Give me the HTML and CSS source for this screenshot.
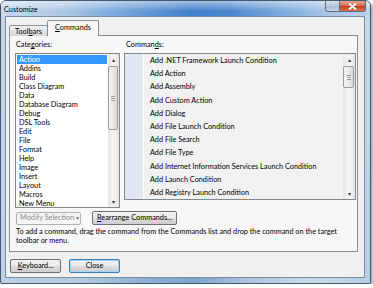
FILE: index.html
```html
<!DOCTYPE html>
<html lang="en">
<head>
    <meta charset="UTF-8">
    <title>Customize</title>
    <link rel="stylesheet" href="styles.css">
</head>
<body>
    <div class="window">
        <div class="titlebar">
            <span class="title">Customize</span>
            <div class="caption-buttons">
                <span class="cap-help">?</span>
                <span class="cap-close">
                    <svg width="9" height="7" viewBox="0 0 9 7"><path d="M1 0.5 L8 6.5 M8 0.5 L1 6.5" stroke="#fff" stroke-width="1.8"/></svg>
                </span>
            </div>
        </div>

        <div class="client">
            <div class="tabs">
                <div class="tab">Tool<u>b</u>ars</div>
                <div class="tab active"><u>C</u>ommands</div>
            </div>

            <div class="panel">
                <div class="lists">
                    <div class="cat-col">
                        <div class="label">Cate<u>g</u>ories:</div>
                        <div class="listbox cat-list">
                            <div class="items">
                                <div class="item selected">Action</div>
                                <div class="item">Addins</div>
                                <div class="item">Build</div>
                                <div class="item">Class Diagram</div>
                                <div class="item">Data</div>
                                <div class="item">Database Diagram</div>
                                <div class="item">Debug</div>
                                <div class="item">DSL Tools</div>
                                <div class="item">Edit</div>
                                <div class="item">File</div>
                                <div class="item">Format</div>
                                <div class="item">Help</div>
                                <div class="item">Image</div>
                                <div class="item">Insert</div>
                                <div class="item">Layout</div>
                                <div class="item">Macros</div>
                                <div class="item">New Menu</div>
                            </div>
                            <div class="scrollbar">
                                <div class="arrow">&#9652;</div>
                                <div class="track">
                                    <div class="thumb cat-thumb"><span class="grip"></span></div>
                                </div>
                                <div class="arrow">&#9662;</div>
                            </div>
                        </div>
                    </div>

                    <div class="cmd-col">
                        <div class="label">Comman<u>d</u>s:</div>
                        <div class="listbox cmd-list">
                            <div class="rows">
                                <div class="row"><span class="icon-cell"></span><span>Add .NET Framework Launch Condition</span></div>
                                <div class="row"><span class="icon-cell"></span><span>Add Action</span></div>
                                <div class="row"><span class="icon-cell"></span><span>Add Assembly</span></div>
                                <div class="row"><span class="icon-cell"></span><span>Add Custom Action</span></div>
                                <div class="row"><span class="icon-cell"></span><span>Add Dialog</span></div>
                                <div class="row"><span class="icon-cell"></span><span>Add File Launch Condition</span></div>
                                <div class="row"><span class="icon-cell"></span><span>Add File Search</span></div>
                                <div class="row"><span class="icon-cell"></span><span>Add File Type</span></div>
                                <div class="row"><span class="icon-cell"></span><span>Add Internet Information Services Launch Condition</span></div>
                                <div class="row"><span class="icon-cell"></span><span>Add Launch Condition</span></div>
                                <div class="row"><span class="icon-cell"></span><span>Add Registry Launch Condition</span></div>
                            </div>
                            <div class="scrollbar">
                                <div class="arrow">&#9652;</div>
                                <div class="track">
                                    <div class="thumb cmd-thumb"><span class="grip"></span></div>
                                </div>
                                <div class="arrow">&#9662;</div>
                            </div>
                        </div>
                    </div>
                </div>

                <div class="actions">
                    <button class="btn disabled">Modify Selection <span class="drop">&#9662;</span></button>
                    <button class="btn rearrange"><u>R</u>earrange Commands...</button>
                </div>

                <p class="hint">To add a command, drag the command from the Commands list and drop the command on the target toolbar or menu.</p>
            </div>

            <div class="footer">
                <button class="btn"><u>K</u>eyboard...</button>
                <button class="btn default">Close</button>
            </div>
        </div>
    </div>
</body>
</html>
```

FILE: styles.css
```css
body {
    margin: 0;
    background: #fff;
    font-family: 'Lato', 'Open Sans', sans-serif;
    font-size: 7.3px;
    color: #000;
}
u {
    text-decoration: underline;
    text-underline-offset: 1px;
}

.window {
    width: 371px;
    height: 284px;
    box-sizing: border-box;
    border: 1px solid #44586c;
    border-radius: 6px 6px 2px 2px;
    background: linear-gradient(100deg, #c4d6e8 0%, #b4cbe2 30%, #8fb1d6 45%, #7ea4cc 58%, #a9c3df 70%, #c9dbec 85%, #b9cee4 100%);
    box-shadow: 2px 2px 3px rgba(0, 0, 0, 0.35);
    display: flex;
    flex-direction: column;
    overflow: hidden;
}

.titlebar {
    height: 15px;
    display: flex;
    justify-content: space-between;
    align-items: flex-start;
    padding-left: 3px;
    background:
        linear-gradient(rgba(255, 255, 255, 0.5), rgba(255, 255, 255, 0.1) 55%, rgba(255, 255, 255, 0) 70%),
        linear-gradient(90deg, #c9d9e9 0%, #a9c5e4 18%, #6d9fd9 35%, #3f7fcc 52%, #4a87d0 62%, #77a6dc 75%, #a6c4e6 88%, #bcd1e7 100%);
}
.title {
    line-height: 15px;
    color: #000;
    padding-top: 1px;
}
.caption-buttons {
    display: flex;
    margin-right: 4px;
}
.cap-help, .cap-close {
    height: 11px;
    display: flex;
    align-items: center;
    justify-content: center;
    border: 1px solid #5b6e84;
    border-top: none;
    box-sizing: border-box;
}
.cap-help {
    width: 15px;
    border-radius: 0 0 0 3px;
    background: linear-gradient(#d6e3f0, #b4c8dd 50%, #a4bbd3 51%, #c4d5e6);
    color: #fff;
    font-size: 7px;
    font-weight: bold;
    text-shadow: 0 0 1px #44586c;
}
.cap-close {
    width: 26px;
    border-left: none;
    border-radius: 0 0 3px 0;
    background: linear-gradient(#e8a492, #d46a4f 50%, #c2391b 51%, #d9725a);
}

.client {
    flex: 1;
    margin: 0 5px 5px 4px;
    background: #f0f0f0;
    border: 1px solid #7c8ea2;
    padding: 4px 6px 4px 3px;
    display: flex;
    flex-direction: column;
}

.tabs {
    display: flex;
    align-items: flex-end;
    height: 15px;
    margin-bottom: -1px;
    position: relative;
    z-index: 1;
}
.tab {
    height: 11px;
    line-height: 11px;
    padding: 0 5px;
    width: 39px;
    box-sizing: border-box;
    border: 1px solid #8e939b;
    border-bottom: none;
    border-radius: 2px 2px 0 0;
    background: linear-gradient(#f3f3f3, #e4e4e4 50%, #d6d6d6);
    text-align: center;
}
.tab.active {
    width: 52px;
    height: 16px;
    line-height: 14px;
    margin-left: -1px;
    background: #f7f7f7;
    border-color: #898c95;
}

.panel {
    height: 217px;
    box-sizing: border-box;
    border: 1px solid #898c95;
    background: #f7f7f7;
    padding: 4px 3px 0 5px;
}

.lists {
    display: flex;
    gap: 4px;
    align-items: flex-start;
}
.label {
    line-height: 9px;
    height: 9px;
    margin-bottom: 4px;
    padding-left: 1px;
}
.cmd-col .label {
    padding-left: 2px;
}

.listbox {
    border: 1px solid #828790;
    background: #fff;
    display: flex;
    box-sizing: border-box;
}
.cat-list {
    width: 105px;
    height: 155px;
}
.cmd-list {
    width: 232px;
    height: 147px;
    background: #f1f1f1;
}

.items {
    flex: 1;
    padding: 1px 1px 0 1px;
}
.item {
    height: 9px;
    line-height: 9px;
    padding-left: 2px;
    white-space: nowrap;
}
.item.selected {
    background: #3399ff;
    color: #fff;
}

.rows {
    flex: 1;
    display: flex;
    flex-direction: column;
}
.row {
    height: 13.2px;
    display: flex;
    align-items: center;
    white-space: nowrap;
    color: #000;
}
.icon-cell {
    width: 18px;
    height: 100%;
    background: #e2e7f4;
    border-right: 1px solid #fff;
    margin-right: 6px;
}

.scrollbar {
    width: 11px;
    flex-shrink: 0;
    display: flex;
    flex-direction: column;
    background: linear-gradient(90deg, #e3e3e3, #f3f3f3 40%, #f3f3f3 60%, #e3e3e3);
}
.cmd-list .scrollbar {
    width: 12px;
}
.arrow {
    height: 11px;
    line-height: 11px;
    text-align: center;
    font-size: 6px;
    color: #333;
}
.track {
    flex: 1;
}
.thumb {
    margin: 1px 1px 0 0;
    border: 1px solid #9a9a9a;
    border-radius: 2px;
    background: linear-gradient(90deg, #f4f4f4, #e8e8e8 50%, #d8d8d8);
    display: flex;
    align-items: center;
    justify-content: center;
}
.cat-thumb {
    height: 62px;
}
.cmd-thumb {
    height: 20px;
}
.grip {
    width: 4px;
    height: 5px;
    background: repeating-linear-gradient(#9c9c9c 0 1px, #f0f0f0 1px 2px);
}

.actions {
    display: flex;
    align-items: center;
    gap: 11px;
    margin-top: 3px;
    height: 14px;
    padding-left: 1px;
}
.btn {
    font-family: 'Lato', 'Open Sans', sans-serif;
    font-size: 7.3px;
    color: #000;
    height: 13px;
    padding: 0 4px;
    border: 1px solid #707070;
    border-radius: 2px;
    background: linear-gradient(#f2f2f2, #ebebeb 50%, #dddddd 51%, #cfcfcf);
    line-height: 10px;
    box-sizing: border-box;
    white-space: nowrap;
}
.btn.disabled {
    width: 65px;
    color: #8d8d8d;
    border-color: #adb2b5;
    background: #f4f4f4;
    text-align: left;
    padding-left: 3px;
}
.drop {
    font-size: 6px;
    color: #777;
}
.btn.rearrange {
    width: 85px;
    height: 14px;
}

.hint {
    margin: 2px 0 0 1px;
    line-height: 9px;
    width: 330px;
}

.footer {
    display: flex;
    gap: 8px;
    padding-top: 7px;
    padding-left: 1px;
}
.footer .btn {
    width: 51px;
    height: 14px;
}
.btn.default {
    border-color: #3c7fb1;
    box-shadow: inset 0 0 0 1px #9ed6f5;
}
```
